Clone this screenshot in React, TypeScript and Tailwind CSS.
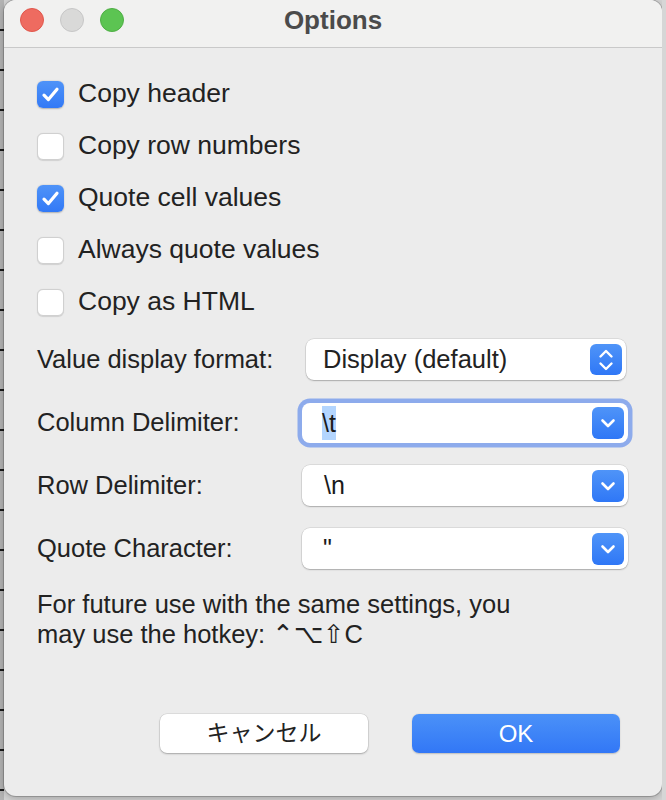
import React from "react";

function CheckRow({ checked, label }: { checked: boolean; label: string }) {
  return (
    <div className="flex h-[52px] items-center">
      {checked ? (
        <div className="flex h-[27px] w-[27px] items-center justify-center rounded-[6px] bg-gradient-to-b from-[#4f93f8] to-[#3279f6] shadow-[0_0.5px_1.5px_rgba(0,0,0,0.25)]">
          <svg width="27" height="27" viewBox="0 0 27 27">
            <path d="M7 14.2 L11.4 18.6 L20 8.2" fill="none" stroke="#ffffff" strokeWidth="3.2" strokeLinecap="round" strokeLinejoin="round" />
          </svg>
        </div>
      ) : (
        <div className="h-[27px] w-[27px] rounded-[6px] border border-[#d0d0d0] bg-white shadow-[0_0.5px_1px_rgba(0,0,0,0.12)]" />
      )}
      <span className="ml-[14px] text-[26.5px] text-[#222222]">{label}</span>
    </div>
  );
}

function ChevronBtn() {
  return (
    <div className="flex h-[32px] w-[32px] items-center justify-center rounded-[6px] bg-gradient-to-b from-[#4f94f8] to-[#2f77f6]">
      <svg width="32" height="32" viewBox="0 0 32 32">
        <path d="M10.5 13.5 L16 19 L21.5 13.5" fill="none" stroke="#ffffff" strokeWidth="2.6" strokeLinecap="round" strokeLinejoin="round" />
      </svg>
    </div>
  );
}

function StepperBtn() {
  return (
    <div className="flex h-[31px] w-[32px] items-center justify-center rounded-[6px] bg-gradient-to-b from-[#4f94f8] to-[#2f77f6]">
      <svg width="32" height="31" viewBox="0 0 32 31">
        <path d="M10.5 12.5 L16 7 L21.5 12.5" fill="none" stroke="#ffffff" strokeWidth="2.4" strokeLinecap="round" strokeLinejoin="round" />
        <path d="M10.5 19.5 L16 25 L21.5 19.5" fill="none" stroke="#ffffff" strokeWidth="2.4" strokeLinecap="round" strokeLinejoin="round" />
      </svg>
    </div>
  );
}

function FormRow({ label, children }: { label: string; children: React.ReactNode }) {
  return (
    <div className="flex h-[63px] items-center">
      <div className="w-[265px] text-[25.5px] text-[#222222]">{label}</div>
      {children}
    </div>
  );
}

export default function App() {
  return (
    <div className="flex h-[800px] w-[666px] overflow-hidden bg-[#d4d4d4] font-['Liberation_Sans','DejaVu_Sans','Noto_Sans_CJK_JP',sans-serif]">
      <div className="h-[800px] w-[4px] shrink-0 bg-[repeating-linear-gradient(to_bottom,#b4b4b4_0px,#b4b4b4_29px,#1a1a1a_29px,#1a1a1a_31px,#b4b4b4_31px,#b4b4b4_40px)]" />
      <div className="flex h-[796px] w-[658px] shrink-0 flex-col overflow-hidden rounded-[12px] bg-[#ececec] shadow-[0_0_0_1px_rgba(0,0,0,0.18),0_2px_8px_rgba(0,0,0,0.25)]">
        {/* Title bar */}
        <div className="h-[48px] shrink-0 border-b border-[#c9c9c9] bg-[#f1f1f0]">
          <div className="grid h-[40px] grid-cols-[1fr_auto_1fr] items-center">
            <div className="flex items-center gap-[16px] pl-[16px]">
              <div className="h-[24px] w-[24px] rounded-full border border-[#e0574c] bg-[#ee6b60]" />
              <div className="h-[24px] w-[24px] rounded-full border border-[#c6c6c6] bg-[#d9d9d8]" />
              <div className="h-[24px] w-[24px] rounded-full border border-[#4fae45] bg-[#5cc452]" />
            </div>
            <div className="text-[26px] font-bold text-[#4b4b4b]">Options</div>
            <div />
          </div>
        </div>

        {/* Body */}
        <div className="flex flex-col pl-[33px] pt-[20px]">
          <CheckRow checked label="Copy header" />
          <CheckRow checked={false} label="Copy row numbers" />
          <CheckRow checked label="Quote cell values" />
          <CheckRow checked={false} label="Always quote values" />
          <CheckRow checked={false} label="Copy as HTML" />

          <FormRow label="Value display format:">
            <div className="ml-[4px] flex h-[41px] w-[320px] items-center justify-between rounded-[8px] bg-white pl-[17px] pr-[4px] shadow-[0_0_0_0.5px_rgba(0,0,0,0.14),0_1px_1.5px_rgba(0,0,0,0.22)]">
              <span className="text-[25.5px] text-[#222222]">Display (default)</span>
              <StepperBtn />
            </div>
          </FormRow>
          <FormRow label="Column Delimiter:">
            <div className="flex h-[40px] w-[326px] items-center justify-between rounded-[8px] bg-white pl-[20px] pr-[4px] shadow-[0_0_0_4.5px_#8dabec]">
              <span className="bg-[#b3d5fe] text-[25px] leading-[34px] text-[#1a1a1a]">\t</span>
              <ChevronBtn />
            </div>
          </FormRow>
          <FormRow label="Row Delimiter:">
            <div className="flex h-[41px] w-[326px] items-center justify-between rounded-[8px] bg-white pl-[22px] pr-[4px] shadow-[0_0_0_0.5px_rgba(0,0,0,0.14),0_1px_1.5px_rgba(0,0,0,0.22)]">
              <span className="text-[25px] text-[#1a1a1a]">\n</span>
              <ChevronBtn />
            </div>
          </FormRow>
          <FormRow label="Quote Character:">
            <div className="flex h-[41px] w-[326px] items-center justify-between rounded-[8px] bg-white pl-[21px] pr-[4px] shadow-[0_0_0_0.5px_rgba(0,0,0,0.14),0_1px_1.5px_rgba(0,0,0,0.22)]">
              <span className="text-[25px] text-[#1a1a1a]">"</span>
              <ChevronBtn />
            </div>
          </FormRow>

          <div className="mt-[9px] text-[25.5px] leading-[30px] text-[#222222]">
            <div>For future use with the same settings, you</div>
            <div>may use the hotkey: ⌃⌥⇧C</div>
          </div>
        </div>

        <div className="mt-[65px] flex justify-end gap-[44px] pr-[42px]">
          <div className="flex h-[39px] w-[208px] items-center justify-center rounded-[7px] bg-white text-[23px] text-[#222222] shadow-[0_0_0_0.5px_rgba(0,0,0,0.12),0_1px_2px_rgba(0,0,0,0.25)]">
            キャンセル
          </div>
          <div className="flex h-[39px] w-[208px] items-center justify-center rounded-[7px] bg-gradient-to-b from-[#4b91f8] to-[#3277f6] text-[24px] text-white shadow-[0_0.5px_1.5px_rgba(0,0,0,0.2)]">
            OK
          </div>
        </div>
      </div>
      <div className="h-[800px] w-[4px] shrink-0 bg-[#d6d6d6]" />
    </div>
  );
}
